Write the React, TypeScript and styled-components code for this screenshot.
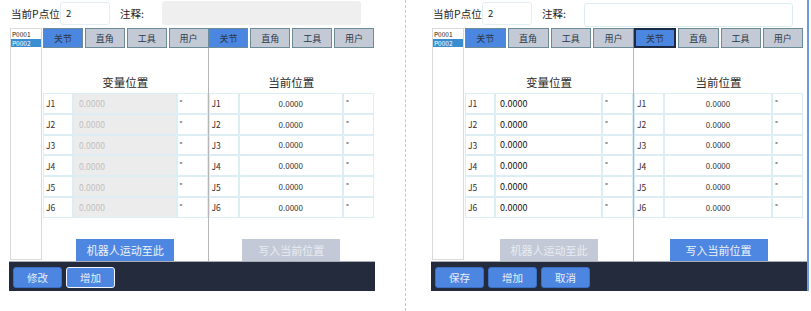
import React from 'react';
import styled, { createGlobalStyle, css } from 'styled-components';

const GlobalStyle = createGlobalStyle`
  html, body {
    margin: 0;
    padding: 0;
    background: #ffffff;
  }
  body {
    font-family: 'Noto Sans CJK SC', 'Noto Sans', sans-serif;
    color: #222222;
  }
  * {
    box-sizing: border-box;
  }
`;

const Page = styled.div`
  display: flex;
  width: 811px;
  height: 311px;
  padding-left: 9px;
  overflow: hidden;
`;

const Separator = styled.div`
  width: 0;
  height: 311px;
  border-left: 1px dashed #c6c6c6;
  margin: 0 25px 0 30px;
`;

const PanelBox = styled.div<{ w: number; edge: boolean }>`
  display: flex;
  flex-direction: column;
  width: ${(props) => props.w}px;
  height: 291px;
  ${(props) =>
    props.edge &&
    css`
      width: ${props.w + 2}px;
      border-right: 2px solid #6c9be2;
    `}
`;

const Header = styled.div`
  display: flex;
  align-items: flex-start;
  height: 28px;
  padding: 2px 14px 0 2px;
`;

const HeaderLabel = styled.span<{ w: number; gap?: number }>`
  width: ${(props) => props.w}px;
  margin-left: ${(props) => props.gap || 0}px;
  font-size: 10.5px;
  line-height: 23px;
  color: #1e1e1e;
  white-space: nowrap;
`;

const PointInput = styled.div`
  width: 50px;
  height: 23px;
  border: 1px solid #e2eef3;
  border-radius: 3px;
  padding-left: 5px;
  font-size: 9.5px;
  line-height: 21px;
  color: #222;
`;

const CommentBox = styled.div<{ disabled: boolean }>`
  flex: 1;
  height: 24px;
  margin-top: ${(props) => (props.disabled ? -1 : 1)}px;
  border-radius: 3px;
  ${(props) =>
    props.disabled
      ? css`
          background: #efefef;
        `
      : css`
          background: #ffffff;
          border: 1px solid #dcecf3;
        `}
`;

const Body = styled.div`
  display: flex;
  height: 233px;
`;

const PointList = styled.div`
  width: 32px;
  height: 232px;
  margin-left: 1px;
  border: 1px solid #dadada;
  padding-top: 1px;
  background: #ffffff;
`;

const PointItem = styled.div<{ selected?: boolean }>`
  height: 8.5px;
  padding-left: 1px;
  font-size: 6.5px;
  line-height: 8.5px;
  color: ${(props) => (props.selected ? '#ffffff' : '#222')};
  background: ${(props) => (props.selected ? '#3a8dcf' : 'transparent')};
`;

const Main = styled.div<{ trail: number }>`
  flex: 1;
  display: flex;
  margin-left: 1px;
  padding-right: ${(props) => props.trail}px;
`;

const Half = styled.div`
  flex: 1;
  display: flex;
  flex-direction: column;
  min-width: 0;
`;

const TabStrip = styled.div`
  display: flex;
  gap: 2px;
  height: 20px;
`;

const Tab = styled.div<{ active?: boolean; focused?: boolean }>`
  flex: 1;
  display: flex;
  align-items: center;
  justify-content: center;
  font-size: 9px;
  color: #2c3847;
  background: ${(props) => (props.active ? '#4b86e0' : '#c3cad6')};
  border: ${(props) => (props.focused ? '2px solid #1c2a44' : '1px solid #6b8b96')};
`;

const Content = styled.div<{ divider: boolean }>`
  flex: 1;
  display: flex;
  flex-direction: column;
  border-right: ${(props) => (props.divider ? '1px solid #b6b6b6' : 'none')};
`;

const Title = styled.div`
  height: 45px;
  display: flex;
  align-items: flex-end;
  justify-content: center;
  padding-bottom: 3px;
  font-size: 11.5px;
  line-height: 16px;
  color: #2a2a2a;
`;

const Grid = styled.div`
  display: grid;
  grid-template-columns: 30px 1fr 31px;
  grid-auto-rows: 20.8px;
`;

type ValueMode = 'disabled' | 'edit' | 'read';

const Cell = styled.div`
  border: 1px solid #dcedf5;
  display: flex;
  align-items: center;
  padding-left: 2px;
  font-size: 8.5px;
  color: #3a2a2a;
`;

const UnitCell = styled(Cell)`
  font-size: 8px;
  color: #555;
  align-items: flex-start;
  padding-top: 3px;
`;

const ValueCell = styled(Cell)<{ mode: ValueMode }>`
  ${(props) =>
    props.mode === 'disabled' &&
    css`
      background: #ececec;
      color: #c1c1c1;
      padding-left: 5px;
      font-size: 8.5px;
    `}
  ${(props) =>
    props.mode === 'edit' &&
    css`
      background: #ffffff;
      color: #111111;
      padding-left: 4px;
      font-size: 9px;
    `}
  ${(props) =>
    props.mode === 'read' &&
    css`
      justify-content: center;
      padding-left: 0;
      color: #333333;
      font-size: 8px;
    `}
`;

const ActionRow = styled.div`
  margin-top: auto;
  display: flex;
  justify-content: center;
`;

const ActionButton = styled.div<{ enabled: boolean }>`
  width: 98px;
  height: 22px;
  display: flex;
  align-items: center;
  justify-content: center;
  font-size: 11px;
  color: ${(props) => (props.enabled ? '#eef3fb' : '#e9ecf2')};
  background: ${(props) => (props.enabled ? '#4e87e1' : '#c3c9d6')};
`;

const Bar = styled.div`
  display: flex;
  gap: 4px;
  height: 30px;
  padding: 5px 0 0 4px;
  background: #242b3c;
  border-top: 1px solid #a9adb5;
`;

const BarButton = styled.div<{ focused?: boolean }>`
  width: 49px;
  height: 21px;
  display: flex;
  align-items: center;
  justify-content: center;
  border-radius: 3px;
  font-size: 10.5px;
  color: #e9effa;
  background: #4c86e0;
  border: ${(props) => (props.focused ? '1.5px solid #f4f6fa' : '1px solid #3c70c4')};
`;

const joints = ['J1', 'J2', 'J3', 'J4', 'J5', 'J6'];
const tabs = ['关节', '直角', '工具', '用户'];

interface IHalfProps {
  title: string;
  mode: ValueMode;
  divider: boolean;
  action: string;
  actionEnabled: boolean;
  focusFirst?: boolean;
}

const PositionHalf: React.FC<IHalfProps> = (props) => (
  <Half>
    <TabStrip>
      {tabs.map((t, i) => (
        <Tab key={t} active={i === 0} focused={i === 0 && props.focusFirst}>
          {t}
        </Tab>
      ))}
    </TabStrip>
    <Content divider={props.divider}>
      <Title>{props.title}</Title>
      <Grid>
        {joints.map((j) => (
          <React.Fragment key={j}>
            <Cell>{j}</Cell>
            <ValueCell mode={props.mode}>0.0000</ValueCell>
            <UnitCell>°</UnitCell>
          </React.Fragment>
        ))}
      </Grid>
      <ActionRow>
        <ActionButton enabled={props.actionEnabled}>{props.action}</ActionButton>
      </ActionRow>
    </Content>
  </Half>
);

interface IPanelProps {
  width: number;
  edge: boolean;
  trail: number;
  editing: boolean;
  buttons: { label: string; focused?: boolean }[];
}

const PointPanel: React.FC<IPanelProps> = (props) => (
  <PanelBox w={props.width} edge={props.edge}>
    <Header>
      <HeaderLabel w={49}>当前P点位</HeaderLabel>
      <PointInput>2</PointInput>
      <HeaderLabel w={42} gap={10}>
        注释:
      </HeaderLabel>
      <CommentBox disabled={!props.editing} />
    </Header>
    <Body>
      <PointList>
        <PointItem>P0001</PointItem>
        <PointItem selected>P0002</PointItem>
      </PointList>
      <Main trail={props.trail}>
        <PositionHalf
          title="变量位置"
          mode={props.editing ? 'edit' : 'disabled'}
          divider
          action="机器人运动至此"
          actionEnabled={!props.editing}
        />
        <PositionHalf
          title="当前位置"
          mode="read"
          divider={false}
          action="写入当前位置"
          actionEnabled={props.editing}
          focusFirst={props.editing}
        />
      </Main>
    </Body>
    <Bar>
      {props.buttons.map((b) => (
        <BarButton key={b.label} focused={b.focused}>
          {b.label}
        </BarButton>
      ))}
    </Bar>
  </PanelBox>
);

export default function App() {
  return (
    <>
      <GlobalStyle />
      <Page>
        <PointPanel
          width={366}
          edge={false}
          trail={1}
          editing={false}
          buttons={[{ label: '修改' }, { label: '增加', focused: true }]}
        />
        <Separator />
        <PointPanel
          width={376}
          edge
          trail={4}
          editing
          buttons={[{ label: '保存' }, { label: '增加' }, { label: '取消' }]}
        />
      </Page>
    </>
  );
}
